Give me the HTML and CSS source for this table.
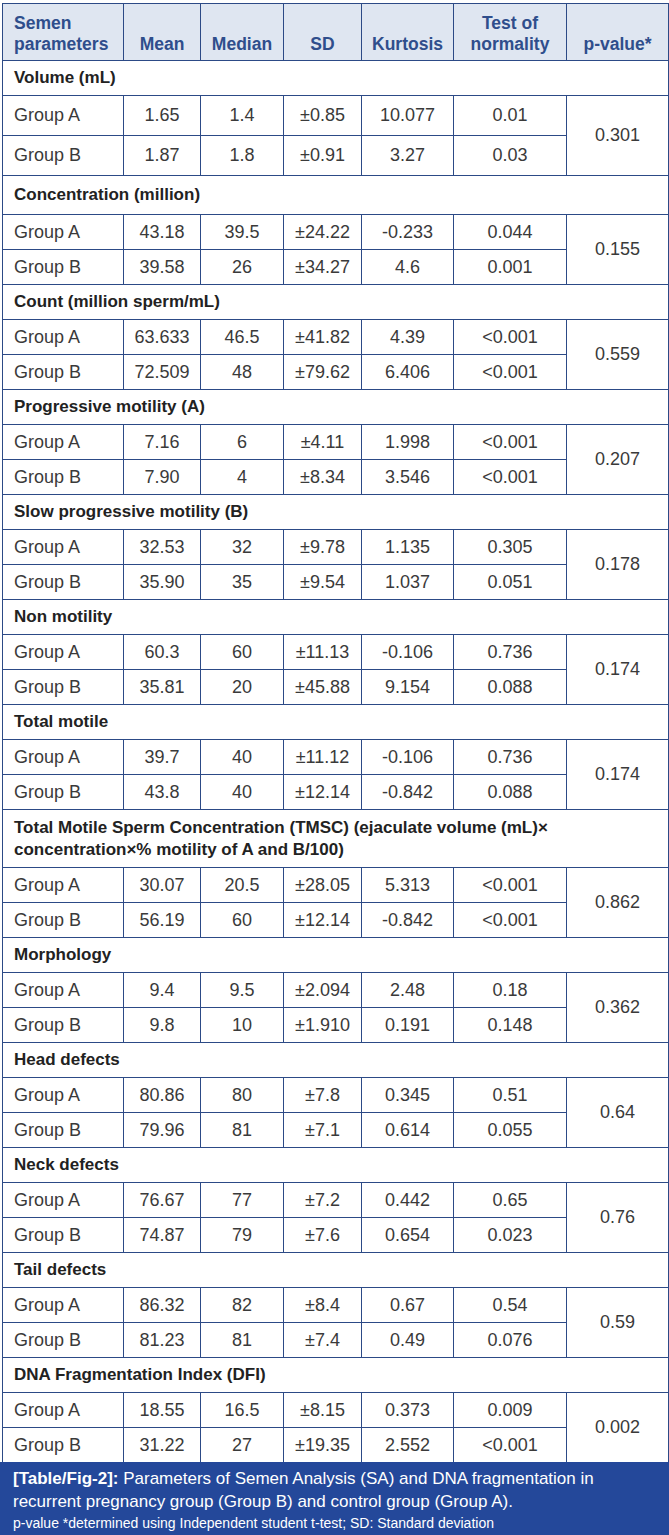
FILE: index.html
```html
<!DOCTYPE html>
<html>
<head>
<meta charset="utf-8">
<link rel="stylesheet" href="styles.css">
</head>
<body>
<div class="page">
<table class="data">
<colgroup>
<col class="c1"><col class="c2"><col class="c3"><col class="c4"><col class="c5"><col class="c6"><col class="c7">
</colgroup>
<thead>
<tr class="head">
<th class="first">Semen<br>parameters</th><th>Mean</th><th>Median</th><th>SD</th><th>Kurtosis</th><th>Test of<br>normality</th><th>p-value*</th>
</tr>
</thead>
<tbody>
<tr class="sec"><td colspan="7">Volume (mL)</td></tr>
<tr class="row tall"><td class="g">Group A</td><td>1.65</td><td>1.4</td><td>±0.85</td><td>10.077</td><td>0.01</td><td rowspan="2">0.301</td></tr>
<tr class="row tall"><td class="g">Group B</td><td>1.87</td><td>1.8</td><td>±0.91</td><td>3.27</td><td>0.03</td></tr>
<tr class="sec tall"><td colspan="7">Concentration (million)</td></tr>
<tr class="row"><td class="g">Group A</td><td>43.18</td><td>39.5</td><td>±24.22</td><td>-0.233</td><td>0.044</td><td rowspan="2">0.155</td></tr>
<tr class="row"><td class="g">Group B</td><td>39.58</td><td>26</td><td>±34.27</td><td>4.6</td><td>0.001</td></tr>
<tr class="sec"><td colspan="7">Count (million sperm/mL)</td></tr>
<tr class="row"><td class="g">Group A</td><td>63.633</td><td>46.5</td><td>±41.82</td><td>4.39</td><td>&lt;0.001</td><td rowspan="2">0.559</td></tr>
<tr class="row"><td class="g">Group B</td><td>72.509</td><td>48</td><td>±79.62</td><td>6.406</td><td>&lt;0.001</td></tr>
<tr class="sec"><td colspan="7">Progressive motility (A)</td></tr>
<tr class="row"><td class="g">Group A</td><td>7.16</td><td>6</td><td>±4.11</td><td>1.998</td><td>&lt;0.001</td><td rowspan="2">0.207</td></tr>
<tr class="row"><td class="g">Group B</td><td>7.90</td><td>4</td><td>±8.34</td><td>3.546</td><td>&lt;0.001</td></tr>
<tr class="sec"><td colspan="7">Slow progressive motility (B)</td></tr>
<tr class="row"><td class="g">Group A</td><td>32.53</td><td>32</td><td>±9.78</td><td>1.135</td><td>0.305</td><td rowspan="2">0.178</td></tr>
<tr class="row"><td class="g">Group B</td><td>35.90</td><td>35</td><td>±9.54</td><td>1.037</td><td>0.051</td></tr>
<tr class="sec"><td colspan="7">Non motility</td></tr>
<tr class="row"><td class="g">Group A</td><td>60.3</td><td>60</td><td>±11.13</td><td>-0.106</td><td>0.736</td><td rowspan="2">0.174</td></tr>
<tr class="row"><td class="g">Group B</td><td>35.81</td><td>20</td><td>±45.88</td><td>9.154</td><td>0.088</td></tr>
<tr class="sec"><td colspan="7">Total motile</td></tr>
<tr class="row"><td class="g">Group A</td><td>39.7</td><td>40</td><td>±11.12</td><td>-0.106</td><td>0.736</td><td rowspan="2">0.174</td></tr>
<tr class="row"><td class="g">Group B</td><td>43.8</td><td>40</td><td>±12.14</td><td>-0.842</td><td>0.088</td></tr>
<tr class="sec two"><td colspan="7">Total Motile Sperm Concentration (TMSC) (ejaculate volume (mL)×<br>concentration×% motility of A and B/100)</td></tr>
<tr class="row"><td class="g">Group A</td><td>30.07</td><td>20.5</td><td>±28.05</td><td>5.313</td><td>&lt;0.001</td><td rowspan="2">0.862</td></tr>
<tr class="row"><td class="g">Group B</td><td>56.19</td><td>60</td><td>±12.14</td><td>-0.842</td><td>&lt;0.001</td></tr>
<tr class="sec"><td colspan="7">Morphology</td></tr>
<tr class="row"><td class="g">Group A</td><td>9.4</td><td>9.5</td><td>±2.094</td><td>2.48</td><td>0.18</td><td rowspan="2">0.362</td></tr>
<tr class="row"><td class="g">Group B</td><td>9.8</td><td>10</td><td>±1.910</td><td>0.191</td><td>0.148</td></tr>
<tr class="sec"><td colspan="7">Head defects</td></tr>
<tr class="row"><td class="g">Group A</td><td>80.86</td><td>80</td><td>±7.8</td><td>0.345</td><td>0.51</td><td rowspan="2">0.64</td></tr>
<tr class="row"><td class="g">Group B</td><td>79.96</td><td>81</td><td>±7.1</td><td>0.614</td><td>0.055</td></tr>
<tr class="sec"><td colspan="7">Neck defects</td></tr>
<tr class="row"><td class="g">Group A</td><td>76.67</td><td>77</td><td>±7.2</td><td>0.442</td><td>0.65</td><td rowspan="2">0.76</td></tr>
<tr class="row"><td class="g">Group B</td><td>74.87</td><td>79</td><td>±7.6</td><td>0.654</td><td>0.023</td></tr>
<tr class="sec"><td colspan="7">Tail defects</td></tr>
<tr class="row"><td class="g">Group A</td><td>86.32</td><td>82</td><td>±8.4</td><td>0.67</td><td>0.54</td><td rowspan="2">0.59</td></tr>
<tr class="row"><td class="g">Group B</td><td>81.23</td><td>81</td><td>±7.4</td><td>0.49</td><td>0.076</td></tr>
<tr class="sec"><td colspan="7">DNA Fragmentation Index (DFI)</td></tr>
<tr class="row"><td class="g">Group A</td><td>18.55</td><td>16.5</td><td>±8.15</td><td>0.373</td><td>0.009</td><td rowspan="2">0.002</td></tr>
<tr class="row"><td class="g">Group B</td><td>31.22</td><td>27</td><td>±19.35</td><td>2.552</td><td>&lt;0.001</td></tr>
</tbody>
</table>
<div class="caption">
<p class="cap-main"><b>[Table/Fig-2]:</b> Parameters of Semen Analysis (SA) and DNA fragmentation in<br>recurrent pregnancy group (Group B) and control group (Group A).</p>
<p class="cap-note">p-value *determined using Independent student t-test; SD: Standard deviation</p>
</div>
</div>
</body>
</html>
```

FILE: styles.css
```css
html, body {
  margin: 0;
  padding: 0;
  background: #ffffff;
}
.page {
  width: 669px;
  padding-top: 3px;
  font-family: "Liberation Sans", Arial, sans-serif;
}
.data {
  margin-left: 2px;
  width: 666px;
  border-collapse: collapse;
  table-layout: fixed;
  font-size: 18px;
  color: #3a3a3a;
}
.c1 { width: 121px; }
.c2 { width: 77px; }
.c3 { width: 83px; }
.c4 { width: 78px; }
.c5 { width: 92px; }
.c6 { width: 113px; }
.c7 { width: 102px; }
.data th, .data td {
  border: 1px solid #2c4a86;
  padding: 0;
}
.head th {
  height: 51px;
  background: #dfe6f1;
  color: #2f4e8c;
  font-weight: bold;
  font-size: 17.5px;
  line-height: 21px;
  text-align: center;
  vertical-align: bottom;
  padding-bottom: 5px;
}
.head th.first {
  text-align: left;
  padding-left: 11px;
}
.sec td {
  height: 34px;
  font-weight: bold;
  font-size: 17px;
  color: #222222;
  text-align: left;
  padding-left: 11px;
  vertical-align: middle;
}
.sec.two td {
  height: 57px;
  line-height: 22px;
}
.row td {
  height: 34px;
  text-align: center;
  vertical-align: middle;
}
.row.tall td { height: 39px; }
.sec.tall td { height: 38px; }
.row td.g {
  text-align: left;
  padding-left: 11px;
}
.caption {
  background: #24489a;
  color: #ffffff;
  padding: 5px 13px 4px 13px;
  margin-top: -1px;
}
.cap-main {
  margin: 0;
  font-size: 17px;
  line-height: 23px;
}
.cap-note {
  margin: 0;
  font-size: 14px;
  line-height: 20px;
}
```
